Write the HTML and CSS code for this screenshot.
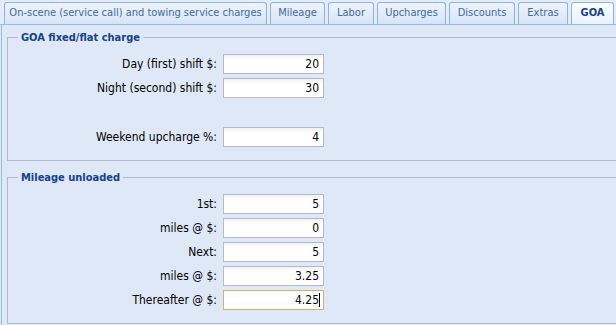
FILE: index.html
```html
<!DOCTYPE html>
<html lang="en">
<head>
  <meta charset="UTF-8">
  <title>GOA charges</title>
  <link rel="stylesheet" href="styles.css">
</head>
<body>

  <div class="tabstrip">
    <div class="tab t-onscene">On-scene (service call) and towing service charges</div>
    <div class="tab t-mileage">Mileage</div>
    <div class="tab t-labor">Labor</div>
    <div class="tab t-upcharges">Upcharges</div>
    <div class="tab t-discounts">Discounts</div>
    <div class="tab t-extras">Extras</div>
    <div class="tab t-goa active">GOA</div>
    <div class="tab t-more"></div>
  </div>

  <div class="panel">

    <fieldset class="group">
      <legend>GOA fixed/flat charge</legend>
      <div class="row">
        <label>Day (first) shift $:</label>
        <input type="text" value="20">
      </div>
      <div class="row">
        <label>Night (second) shift $:</label>
        <input type="text" value="30">
      </div>
      <div class="row spacer"></div>
      <div class="row">
        <label>Weekend upcharge %:</label>
        <input type="text" value="4">
      </div>
    </fieldset>

    <fieldset class="group">
      <legend>Mileage unloaded</legend>
      <div class="row">
        <label>1st:</label>
        <input type="text" value="5">
      </div>
      <div class="row">
        <label>miles @ $:</label>
        <input type="text" value="0">
      </div>
      <div class="row">
        <label>Next:</label>
        <input type="text" value="5">
      </div>
      <div class="row">
        <label>miles @ $:</label>
        <input type="text" value="3.25">
      </div>
      <div class="row">
        <label>Thereafter @ $:</label>
        <span class="field focus"><input type="text" value="4.25"></span>
      </div>
    </fieldset>

  </div>

</body>
</html>
```
FILE: styles.css
```css
body {
  margin: 0;
  background: #dfe8f6;
  font-family: "DejaVu Sans Condensed", "Liberation Sans", sans-serif;
  font-size: 12px;
  color: #000;
  overflow: hidden;
  width: 616px;
  height: 325px;
}

/* tabs */
.tabstrip {
  display: flex;
  gap: 3px;
  height: 22px;
  padding: 2px 0 0 4px;
  border-bottom: 1px solid #99bbe8;
  background: #e4ecf8;
  overflow: hidden;
}

.tab {
  flex: none;
  box-sizing: border-box;
  height: 22px;
  border: 1px solid #8db2e3;
  border-bottom: none;
  border-radius: 3px 3px 0 0;
  background: linear-gradient(#eef4fd, #d7e4f6);
  color: #416aa3;
  font-size: 11px;
  line-height: 20px;
  text-align: center;
  white-space: nowrap;
}

.tab.active {
  height: 23px;
  margin-bottom: -1px;
  background: linear-gradient(#fbfdff, #e9f1fd);
  color: #15428b;
  font-weight: bold;
}

.t-onscene { width: 263px; }
.t-mileage { width: 55px; }
.t-labor { width: 46px; }
.t-upcharges { width: 69px; }
.t-discounts { width: 66px; }
.t-extras { width: 50px; }
.t-goa { width: 43px; }
.t-more { flex: 1; }

/* body */
.panel {
  margin-left: 1px;
  border-left: 1px solid #99bbe8;
  padding: 6px 0 0 5px;
  height: 300px;
  background: #dfe8f6;
}

.group {
  margin: 0 0 10px 0;
  padding: 10px 0 13px 10px;
  border: 1px solid #b5b8c8;
  border-right: none;
}

.group legend {
  padding: 0 3px;
  font-size: 11px;
  line-height: 13px;
  font-weight: bold;
  color: #15428b;
}

.row {
  display: flex;
  align-items: center;
  height: 20px;
  margin-bottom: 4px;
}

.row:last-child {
  margin-bottom: 0;
}

.row.spacer {
  height: 21px;
}

.row label {
  box-sizing: border-box;
  width: 205px;
  padding-right: 6px;
  text-align: right;
  white-space: nowrap;
}

.row input {
  box-sizing: border-box;
  width: 101px;
  height: 20px;
  margin: 0;
  padding: 0 4px 0 3px;
  border: 1px solid #b5b8c8;
  background: linear-gradient(#f1f1f1, #fff 5px);
  font-family: inherit;
  font-size: 12px;
  text-align: right;
  color: #000;
  outline: none;
}

.field {
  position: relative;
  display: block;
}

.field.focus input {
  border-color: #d1b46c;
  background: #fff;
}

/* caret after the value */
.field.focus::after {
  content: "";
  position: absolute;
  top: 3px;
  right: 4px;
  width: 1px;
  height: 14px;
  background: #000;
}
```
